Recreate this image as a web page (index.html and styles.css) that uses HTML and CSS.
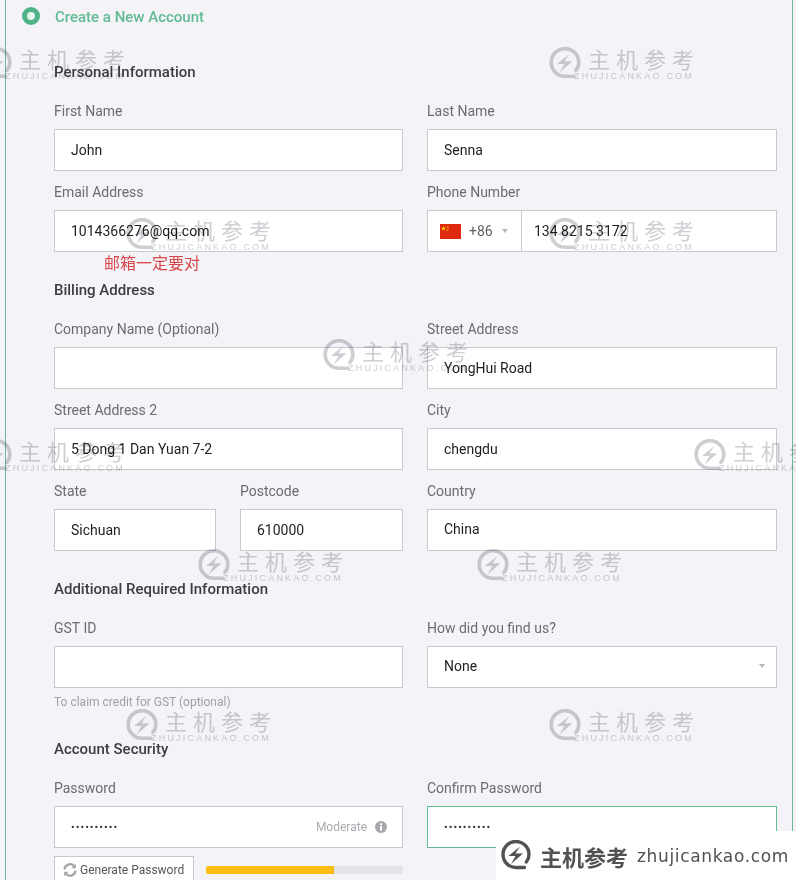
FILE: index.html
```html
<!DOCTYPE html>
<html lang="en">
<head>
<meta charset="utf-8">
<title>Create a New Account</title>
<link rel="stylesheet" href="styles.css">
</head>
<body>
<svg class="defs" width="0" height="0" aria-hidden="true">
  <symbol id="mark" viewBox="0 0 32 32">
    <path d="M24.500 27.500H16A13 13 0 1 1 29 14.500c0 3-1 5.500-2.700 7.500" fill="none" stroke="currentColor" stroke-width="3.400" stroke-linecap="round"/>
    <path d="M20 6.500 8.500 16h7L11 24l12-10.500h-7.500z" fill="currentColor"/>
  </symbol>
</svg>
<main class="panel">
  <div class="step"><span class="radio"></span><span class="step-title">Create a New Account</span></div>

  <h2 class="heading heading-first">Personal Information</h2>
  <div class="grid">
    <div class="field"><div class="label">First Name</div><div class="input">John</div></div>
    <div class="field"><div class="label">Last Name</div><div class="input">Senna</div></div>
    <div class="field"><div class="label">Email Address</div><div class="input">1014366276@qq.com</div><div class="note">邮箱一定要对</div></div>
    <div class="field"><div class="label">Phone Number</div>
      <div class="input phone">
        <div class="dial">
          <svg class="flag" viewBox="0 0 21 15"><rect width="21" height="15" fill="#de2910"/><path d="M3.500 2 4.100 3.800H6L4.500 4.900 5 6.700 3.500 5.600 2 6.700 2.500 4.900 1 3.800H2.900z" fill="#ffde00"/><circle cx="7" cy="2" r=".6" fill="#ffde00"/><circle cx="8" cy="3.500" r=".6" fill="#ffde00"/><circle cx="8" cy="5.200" r=".6" fill="#ffde00"/><circle cx="7" cy="6.700" r=".6" fill="#ffde00"/></svg>
          <span class="code">+86</span><span class="caret"></span>
        </div>
        <span class="number">134 8215 3172</span>
      </div>
    </div>
  </div>

  <h2 class="heading">Billing Address</h2>
  <div class="grid">
    <div class="field"><div class="label">Company Name (Optional)</div><div class="input"></div></div>
    <div class="field"><div class="label">Street Address</div><div class="input">YongHui Road</div></div>
    <div class="field"><div class="label">Street Address 2</div><div class="input">5 Dong 1 Dan Yuan 7-2</div></div>
    <div class="field"><div class="label">City</div><div class="input">chengdu</div></div>
    <div class="subgrid">
      <div class="field"><div class="label">State</div><div class="input">Sichuan</div></div>
      <div class="field"><div class="label">Postcode</div><div class="input">610000</div></div>
    </div>
    <div class="field"><div class="label">Country</div><div class="input raised">China</div></div>
  </div>

  <h2 class="heading">Additional Required Information</h2>
  <div class="grid">
    <div class="field tight"><div class="label">GST ID</div><div class="input"></div><div class="hint">To claim credit for GST (optional)</div></div>
    <div class="field tight"><div class="label">How did you find us?</div><div class="input select raised">None<span class="caret"></span></div></div>
  </div>

  <h2 class="heading heading-security">Account Security</h2>
  <div class="grid">
    <div class="field">
      <div class="label">Password</div>
      <div class="input password"><span class="dots">••••••••••</span>
        <span class="strength">Moderate
          <svg class="info" viewBox="0 0 12 12"><circle cx="6" cy="6" r="6" fill="#a6a8ad"/><rect x="5" y="5" width="2" height="4.500" fill="#fff"/><rect x="5" y="2.300" width="2" height="1.800" fill="#fff"/></svg>
        </span>
      </div>
      <div class="generate">
        <button class="btn" type="button">
          <svg class="refresh" viewBox="0 0 14 14"><path d="M1.500 6.500A5.500 5.500 0 0 1 11 3" fill="none" stroke="#a2a4a8" stroke-width="2.200"/><path d="M12.800.8v4.400H8.400z" fill="#a2a4a8"/><path d="M12.500 7.500A5.500 5.500 0 0 1 3 11" fill="none" stroke="#a2a4a8" stroke-width="2.200"/><path d="M1.200 13.200V8.800h4.400z" fill="#a2a4a8"/></svg>
          Generate Password
        </button>
        <div class="meter"><div class="meter-fill"></div></div>
      </div>
    </div>
    <div class="field"><div class="label">Confirm Password</div><div class="input focus"><span class="dots">••••••••••</span></div></div>
  </div>
</main>

<div class="wm wm-a"><svg class="wm-mark"><use href="#mark"/></svg><div class="wm-text"><div class="wm-cn">主机参考</div><div class="wm-en">ZHUJICANKAO.COM</div></div></div>
<div class="wm wm-b"><svg class="wm-mark"><use href="#mark"/></svg><div class="wm-text"><div class="wm-cn">主机参考</div><div class="wm-en">ZHUJICANKAO.COM</div></div></div>
<div class="wm wm-c"><svg class="wm-mark"><use href="#mark"/></svg><div class="wm-text"><div class="wm-cn">主机参考</div><div class="wm-en">ZHUJICANKAO.COM</div></div></div>
<div class="wm wm-d"><svg class="wm-mark"><use href="#mark"/></svg><div class="wm-text"><div class="wm-cn">主机参考</div><div class="wm-en">ZHUJICANKAO.COM</div></div></div>
<div class="wm wm-e"><svg class="wm-mark"><use href="#mark"/></svg><div class="wm-text"><div class="wm-cn">主机参考</div><div class="wm-en">ZHUJICANKAO.COM</div></div></div>
<div class="wm wm-f"><svg class="wm-mark"><use href="#mark"/></svg><div class="wm-text"><div class="wm-cn">主机参考</div><div class="wm-en">ZHUJICANKAO.COM</div></div></div>
<div class="wm wm-g"><svg class="wm-mark"><use href="#mark"/></svg><div class="wm-text"><div class="wm-cn">主机参考</div><div class="wm-en">ZHUJICANKAO.COM</div></div></div>
<div class="wm wm-h"><svg class="wm-mark"><use href="#mark"/></svg><div class="wm-text"><div class="wm-cn">主机参考</div><div class="wm-en">ZHUJICANKAO.COM</div></div></div>
<div class="wm wm-i"><svg class="wm-mark"><use href="#mark"/></svg><div class="wm-text"><div class="wm-cn">主机参考</div><div class="wm-en">ZHUJICANKAO.COM</div></div></div>
<div class="wm wm-j"><svg class="wm-mark"><use href="#mark"/></svg><div class="wm-text"><div class="wm-cn">主机参考</div><div class="wm-en">ZHUJICANKAO.COM</div></div></div>
<div class="wm wm-k"><svg class="wm-mark"><use href="#mark"/></svg><div class="wm-text"><div class="wm-cn">主机参考</div><div class="wm-en">ZHUJICANKAO.COM</div></div></div>

<div class="brand"><svg class="brand-mark"><use href="#mark"/></svg><span class="brand-cn">主机参考</span><span class="brand-en">zhujicankao.com</span></div>
</body>
</html>
```
FILE: styles.css
```css
* { box-sizing: border-box; }
html, body { margin: 0; height: 880px; overflow: hidden; }
body {
  position: relative;
  background: #f3f3f8;
  font-family: Roboto, "Noto Sans CJK SC", sans-serif;
  font-size: 14px;
  color: #26262b;
}
.defs { position: absolute; }
.panel {
  margin-left: 5px;
  width: 788px;
  height: 880px;
  padding: 0 15px 0 48px;
  border-left: 1px solid #6fb79b;
  border-right: 1px solid #6fb79b;
}
.step { display: flex; align-items: center; height: 33px; margin-left: -32px; gap: 15px; }
.radio {
  width: 18px;
  height: 18px;
  margin-bottom: 1px;
  border-radius: 50%;
  border: 5px solid #4fb286;
  background: #e4f3ec;
}
.step-title { font-weight: 500; font-size: 15px; color: #63bb93; }
.heading {
  margin: 17px 0 19px;
  height: 20px;
  line-height: 20px;
  font-size: 15px;
  font-weight: 500;
  color: #3c3c42;
}
.heading-first { margin-top: 29px; }
.heading-security { margin-top: 28px; }
.grid { display: grid; grid-template-columns: 349px 350px; column-gap: 24px; }
.subgrid { display: grid; grid-template-columns: 162px 163px; column-gap: 24px; }
.field { position: relative; margin-bottom: 11px; min-width: 0; }
.label { height: 21px; line-height: 21px; margin-bottom: 7px; font-size: 14px; color: #6b6b73; }
.input {
  display: flex;
  align-items: center;
  height: 42px;
  padding: 0 16px;
  background: #fff;
  border: 1px solid #c9cacd;
  font-size: 14px;
  color: #1e1e22;
}
.raised { padding-bottom: 2px; }
.note {
  position: absolute;
  left: 50px;
  top: 71px;
  line-height: 22px;
  font-size: 16px;
  color: #d8474a;
}
.phone { padding: 0; }
.dial {
  display: flex;
  align-items: center;
  width: 94px;
  height: 100%;
  padding-left: 12px;
  border-right: 1px solid #c9cacd;
}
.flag { width: 21px; height: 15px; }
.code { margin-left: 8px; color: #5f5f66; }
.caret {
  width: 0;
  height: 0;
  border-left: 3.500px solid transparent;
  border-right: 3.500px solid transparent;
  border-top: 4px solid #b5b6ba;
}
.dial .caret { margin-left: 9px; }
.number { padding-left: 12px; }
.select { justify-content: space-between; padding-right: 11px; }
.tight { margin-bottom: 0; }
.hint { margin-top: 6px; height: 17px; line-height: 17px; font-size: 12px; color: #a0a1a8; }
.dots { font-size: 11px; letter-spacing: 1px; color: #333338; }
.password { justify-content: space-between; padding-right: 15px; }
.strength { display: flex; align-items: center; gap: 8px; font-size: 12px; color: #a9abb0; }
.info { width: 12px; height: 12px; }
.focus { border-color: #63bb93; }
.generate { display: flex; align-items: center; gap: 12px; margin-top: 8px; }
.btn {
  display: flex;
  align-items: center;
  gap: 3px;
  flex: none;
  width: 140px;
  height: 28px;
  padding: 0 0 0 8px;
  background: #fff;
  border: 1px solid #c9cacd;
  font: 12px Roboto, sans-serif;
  color: #55555c;
}
.refresh { width: 14px; height: 14px; }
.meter { flex: 1; height: 8px; background: #e3e3e7; border-radius: 2px; overflow: hidden; }
.meter-fill { width: 65%; height: 100%; background: #fbbd12; }

.wm {
  position: absolute;
  display: flex;
  align-items: flex-start;
  width: 146px;
  height: 36px;
  color: #cfcfd3;
  mix-blend-mode: multiply;
  pointer-events: none;
}
.wm-mark { flex: none; width: 34px; height: 34px; }
.wm-text { margin-left: 6px; }
.wm-cn {
  height: 23px;
  line-height: 23px;
  font-family: "Noto Sans CJK SC", sans-serif;
  font-size: 22px;
  letter-spacing: 6px;
  white-space: nowrap;
}
.wm-en {
  height: 10px;
  margin: 1px 0 0 -14px;
  line-height: 10px;
  font-family: "Liberation Sans", sans-serif;
  font-size: 9px;
  letter-spacing: 2.200px;
  white-space: nowrap;
}
.wm-a { left: -21px; top: 47px; }
.wm-b { left: 548px; top: 47px; }
.wm-c { left: 125px; top: 218px; }
.wm-d { left: 548px; top: 218px; }
.wm-e { left: 322px; top: 339px; }
.wm-f { left: -21px; top: 439px; }
.wm-g { left: 693px; top: 439px; }
.wm-h { left: 197px; top: 549px; }
.wm-i { left: 476px; top: 549px; }
.wm-j { left: 125px; top: 709px; }
.wm-k { left: 548px; top: 709px; }

.brand {
  position: absolute;
  right: 0;
  bottom: 0;
  display: flex;
  align-items: center;
  width: 300px;
  height: 49px;
  padding-left: 4px;
  background: #fff;
  color: #525252;
  white-space: nowrap;
}
.brand-mark { flex: none; width: 32px; height: 32px; }
.brand-cn {
  margin-left: 8px;
  font-family: "Noto Sans CJK SC", sans-serif;
  font-size: 22px;
  font-weight: 700;
}
.brand-en { margin-left: 9px; font-family: "DejaVu Sans", sans-serif; font-size: 17px; letter-spacing: .65px; }
```
